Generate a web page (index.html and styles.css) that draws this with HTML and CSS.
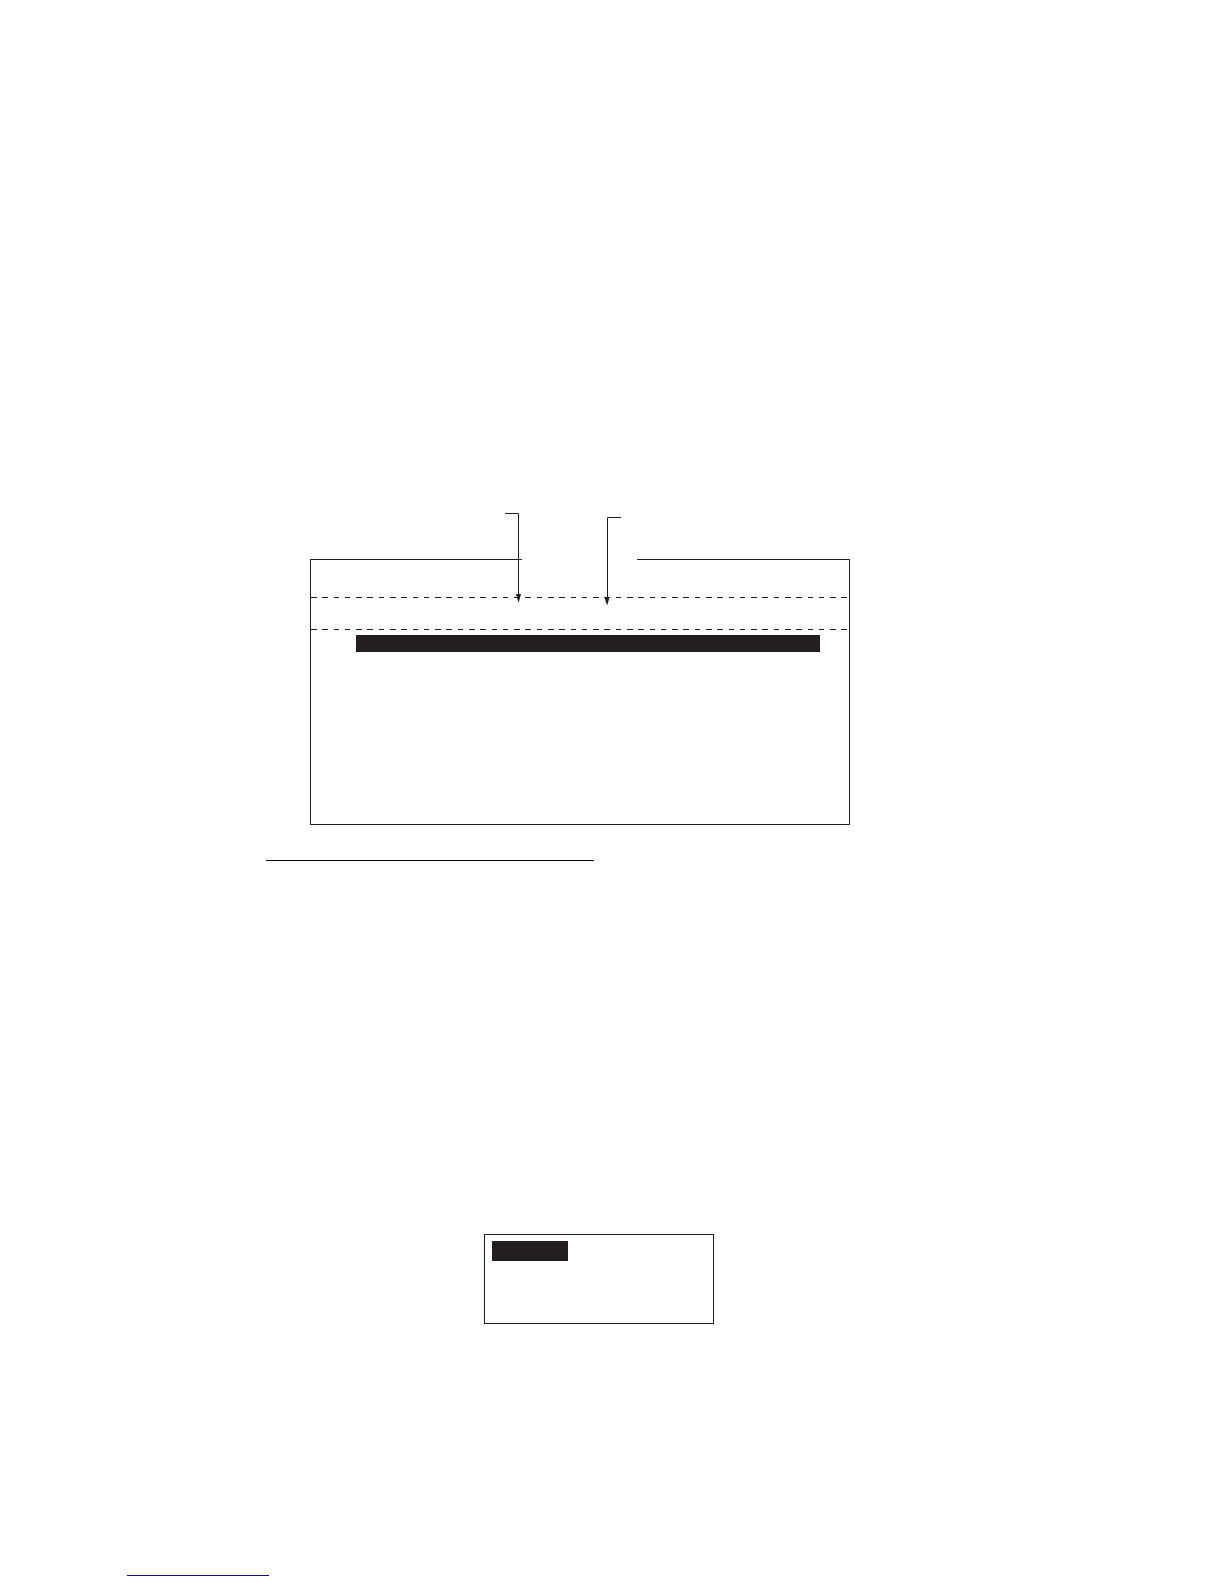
FILE: index.html
```html
<!DOCTYPE html>
<html lang="en">
<head>
  <meta charset="utf-8">
  <title>Menu Layout</title>
  <link rel="stylesheet" href="styles.css">
</head>
<body>

<main class="page">
  <section class="screen">
    <div class="screen-top">
      <span class="edge edge-left"></span>
      <span class="edge edge-right"></span>
    </div>
    <div class="screen-body">
      <div class="title-row"></div>
      <svg class="dashes" height="1">
        <line x1="0" y1="0.5" x2="100%" y2="0.5" pathLength="95"/>
      </svg>
      <div class="header-row"></div>
      <svg class="dashes" height="1">
        <line x1="0" y1="0.5" x2="100%" y2="0.5" pathLength="95"/>
      </svg>
      <div class="selected-row"></div>
    </div>

    <!-- callout arrows over the screen -->
    <svg class="arrows" width="117" height="93" viewBox="0 0 117 93">
      <path class="arrow-line" d="M0 0.5H13.5V84"/>
      <path class="arrow-head" d="M11 81H16L15 85L13.5 89.5L12 85Z"/>
      <path class="arrow-line" d="M116 4.5H102.5V87"/>
      <path class="arrow-head" d="M99.5 84H104.5L103.5 88L102.2 92.5L100.5 88Z"/>
    </svg>
  </section>

  <hr class="rule">

  <section class="popup">
    <div class="popup-selected"></div>
  </section>

  <footer class="footer">
    <a href="#" class="footer-link"></a>
  </footer>
</main>

</body>
</html>
```

FILE: styles.css
```css
body {
  margin: 0;
  background-color: #fff;
  font-family: "Liberation Sans", Arial, sans-serif;
}
.page {
  display: flex;
  flex-direction: column;
  padding: 559px 0 8px;
}

/* main screen */
.screen {
  position: relative;
  margin: 0 374px 0 310px;
}
.screen-top {
  display: flex;
  gap: 115px;
}
.edge {
  height: 1px;
  background-color: #231f20;
}
.edge-left {
  flex: 0 0 212px;
}
.edge-right {
  flex: 1;
}
.screen-body {
  min-height: 264px;
  border: 1px solid #231f20;
  border-top: none;
}
.title-row {
  height: 37px;
}
.header-row {
  height: 31px;
}
.dashes {
  display: block;
  width: calc(100% - 2px);
}
.dashes line {
  stroke: #231f20;
  stroke-width: 1px;
  stroke-dasharray: 1 1;
  shape-rendering: crispEdges;
}
.selected-row {
  height: 17px;
  margin: 5px 29px 0 45px;
  background-color: #231f20;
}
.arrows {
  position: absolute;
  top: -46px;
  left: 195px;
}
.arrow-line {
  fill: none;
  stroke: #231f20;
  stroke-width: 1px;
}
.arrow-head {
  fill: #231f20;
}

.rule {
  width: 328px;
  height: 1px;
  margin: 35px 0 0 266px;
  border: none;
  background-color: #000;
}

/* small popup */
.popup {
  min-height: 82px;
  margin: 373px 510px 0 484px;
  padding: 6px 7px 0;
  border: 1px solid #231f20;
}
.popup-selected {
  width: 76px;
  height: 20px;
  background-color: #231f20;
}

.footer {
  margin: 251px 0 0 127px;
}
.footer-link {
  display: block;
  width: 142px;
  border-bottom: 1px solid #10108c;
}
```
